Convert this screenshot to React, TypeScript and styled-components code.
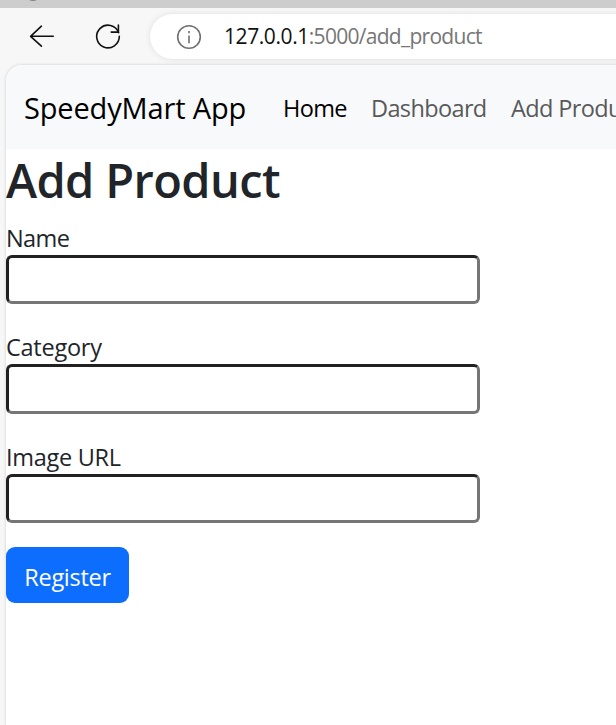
import React from "react";
import styled, { createGlobalStyle } from "styled-components";

const GlobalStyle = createGlobalStyle`
  * { box-sizing: border-box; }
  body {
    margin: 0;
    overflow: hidden;
    background: #f7f7f7;
    font-family: "Segoe UI", "Open Sans", "Noto Sans", sans-serif;
    color: #212529;
  }
`;

const Browser = styled.div`
  width: 616px;
  height: 725px;
  overflow: hidden;
  display: flex;
  flex-direction: column;
`;

const TabStrip = styled.div`
  height: 8px;
  flex: none;
  background: #cdcdcd;
  padding-left: 25px;
  overflow: hidden;
`;

const TabIcon = styled.div`
  width: 16px;
  height: 16px;
  margin-top: -15px;
  border-radius: 50%;
  background: #858585;
`;

const Toolbar = styled.div`
  height: 56px;
  flex: none;
  display: flex;
  align-items: flex-start;
  padding: 6px 0 0 28px;
`;

const ToolIcon = styled.svg`
  width: 28px;
  height: 28px;
  margin: 8px 38px 0 0;
  flex: none;
  fill: none;
  stroke: #111;
  stroke-width: 1.6;
  stroke-linecap: round;
  stroke-linejoin: round;
`;

const AddressBar = styled.div`
  flex: 1 0 auto;
  width: 500px;
  height: 45px;
  margin: 0 -40px 0 -10px;
  padding-left: 26px;
  border-radius: 23px;
  background: #fff;
  box-shadow: 0 0 6px rgba(0, 0, 0, 0.1);
  display: flex;
  align-items: center;
`;

const InfoIcon = styled.svg`
  width: 26px;
  height: 26px;
  fill: none;
  stroke: #707070;
  stroke-width: 1.6;
`;

const Url = styled.span`
  margin-left: 22px;
  font-size: 21px;
  line-height: 30px;
  letter-spacing: -0.72px;
  padding-bottom: 1px;
  white-space: nowrap;
  color: #767676;
`;

const Host = styled.span`
  color: #111;
  letter-spacing: -0.42px;
`;

const Page = styled.main`
  flex: 1;
  width: 640px;
  margin-left: 5px;
  border: 1px solid #e6e7e9;
  border-bottom: 0;
  border-radius: 17px 0 0 0;
  overflow: hidden;
  background: #fff;
  box-shadow: 0 0 3px rgba(0, 0, 0, 0.08);
`;

const Navbar = styled.nav`
  height: 84px;
  background: #f8f9fa;
  display: flex;
  align-items: center;
  padding: 1px 0 0 18px;
  white-space: nowrap;
`;

const Brand = styled.span`
  width: 259px;
  flex: none;
  font-size: 29px;
  letter-spacing: -0.15px;
  color: #000;
`;

const NavLink = styled.span<{ $active?: boolean; $width: number }>`
  width: ${(p) => p.$width}px;
  flex: none;
  font-size: 23.5px;
  letter-spacing: -0.63px;
  color: ${(p) => (p.$active ? "#000" : "#58595a")};
`;

const Title = styled.h1`
  margin: 0 0 12px;
  font-size: 47px;
  font-weight: 600;
  line-height: 57.6px;
  letter-spacing: -0.62px;
  padding-top: 3px;
  height: 57.6px;
`;

const Field = styled.label`
  display: block;
  height: 85.5px;
  margin-bottom: 24px;
`;

const FieldName = styled.span<{ $tracking: number }>`
  display: block;
  height: 36px;
  line-height: 38px;
  font-size: 23.5px;
  letter-spacing: ${(p) => p.$tracking}px;
`;

const TextInput = styled.input`
  display: block;
  width: 474px;
  height: 49.5px;
  border: 3px solid;
  border-color: #212121 #767676 #767676 #212121;
  border-radius: 6px;
  background: #fff;
`;

const Submit = styled.button`
  display: block;
  width: 123px;
  height: 56px;
  padding: 3px 0 0;
  border: 0;
  border-radius: 9px;
  background: #0d6efd;
  color: #fff;
  font: 23.5px "Segoe UI", "Open Sans", "Noto Sans", sans-serif;
  letter-spacing: -0.3px;
`;

const fields = [
  { name: "Name", tracking: -0.6 },
  { name: "Category", tracking: -0.25 },
  { name: "Image URL", tracking: -0.28 },
];

export default function App() {
  return (
    <Browser>
      <GlobalStyle />
      <TabStrip>
        <TabIcon />
      </TabStrip>
      <Toolbar>
        <ToolIcon viewBox="0 0 28 28">
          <path d="M25.3 14.3H2.8M13.4 4.2L2.6 14.3l10.8 9.9" />
        </ToolIcon>
        <ToolIcon viewBox="0 0 28 28">
          <path d="M24.6 10.6A11.3 11.3 0 1 0 25.3 14.3" />
          <path d="M24.4 3v7.1H17.2" />
        </ToolIcon>
        <AddressBar>
          <InfoIcon viewBox="0 0 26 26">
            <circle cx="13" cy="13" r="11.3" />
            <path d="M13 11.4v7.8M13 7v2.2" />
          </InfoIcon>
          <Url>
            <Host>127.0.0.1</Host>:5000/add_product
          </Url>
        </AddressBar>
      </Toolbar>
      <Page>
        <Navbar>
          <Brand>SpeedyMart App</Brand>
          <NavLink $active $width={88}>Home</NavLink>
          <NavLink $width={140}>Dashboard</NavLink>
          <NavLink $width={140}>Add Product</NavLink>
        </Navbar>
        <Title>Add Product</Title>
        <form>
          {fields.map((f) => (
            <Field key={f.name}>
              <FieldName $tracking={f.tracking}>{f.name}</FieldName>
              <TextInput type="text" />
            </Field>
          ))}
          <Submit type="button">Register</Submit>
        </form>
      </Page>
    </Browser>
  );
}
